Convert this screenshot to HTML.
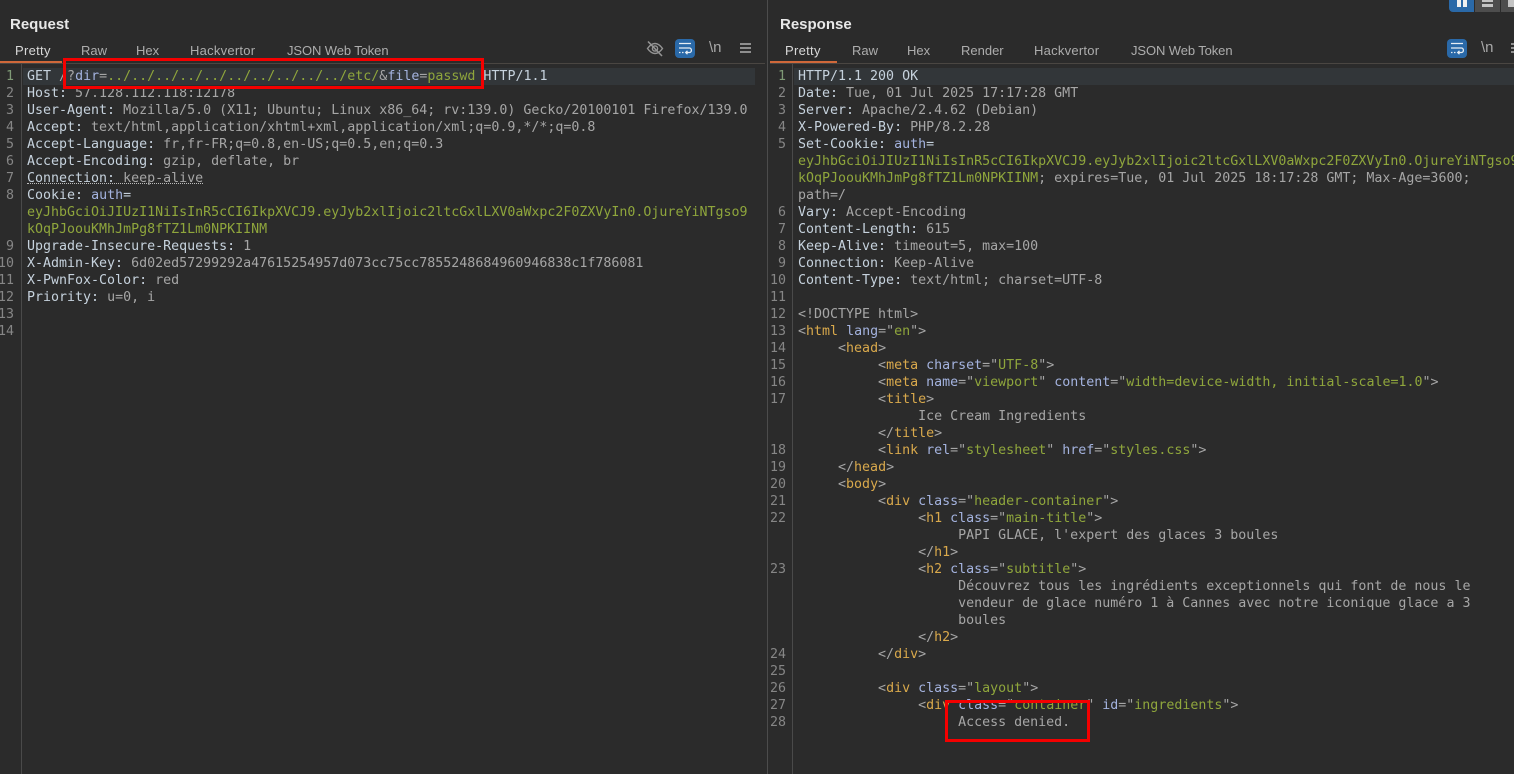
<!DOCTYPE html>
<html lang="en">
<head>
<meta charset="utf-8">
<title>Burp Repeater</title>
<style>
html,body{margin:0;padding:0;background:#2b2b2b;width:1514px;height:774px;overflow:hidden}
.abs,.h,.tab{position:absolute}
.h{font:bold 15px "Liberation Sans",sans-serif;color:#e8e8e8;top:15px;white-space:nowrap}
.tab{font:13px "Liberation Sans",sans-serif;color:#adadad;top:43px;white-space:nowrap}
.tab.on{color:#d8d8d8;letter-spacing:.3px}
.tab.w{letter-spacing:.25px}
.tab.j{letter-spacing:-.1px}
.code{position:absolute;top:68px;font:13.3px/17px "DejaVu Sans Mono","Liberation Mono",monospace;overflow:hidden;color:#a6a6a6}
.r{position:relative;height:17px;white-space:pre}
.r b{position:absolute;font-weight:normal;color:#868686;text-align:right;width:32px;top:0}
#L{left:0;width:756px;height:706px}
#R{left:769px;width:745px;height:706px}
#L .r{padding-left:27px}
#R .r{padding-left:29px}
#L .r b{left:-18px}
#R .r b{left:-15px}
.k{color:#c6d2dd}.a{color:#a4b3df}.g{color:#8fa63c}.t{color:#d9a94c}
.n1{color:#7f9a76!important}
</style>
</head>
<body>
<!-- backgrounds -->
<div class="abs" style="left:23px;top:68px;width:732px;height:17px;background:#323639"></div>
<div class="abs" style="left:794px;top:68px;width:720px;height:17px;background:#323639"></div>
<div class="abs" style="left:767px;top:0;width:1px;height:774px;background:#4c4c4c"></div>
<div class="abs" style="left:21px;top:64px;width:1px;height:710px;background:#4a4a4a"></div>
<div class="abs" style="left:792px;top:64px;width:1px;height:710px;background:#4a4a4a"></div>
<div class="abs" style="left:0;top:63px;width:765px;height:1px;background:#4a4642"></div>
<div class="abs" style="left:770px;top:63px;width:744px;height:1px;background:#4a4642"></div>
<div class="abs" style="left:0;top:61px;width:62px;height:2px;background:#d0683a"></div>
<div class="abs" style="left:770px;top:61px;width:67px;height:2px;background:#d0683a"></div>

<!-- headings -->
<div class="h" style="left:10px;top:16px">Request</div>
<div class="h" style="left:780px;top:16px">Response</div>

<!-- tabs -->
<div class="tab on" style="left:15px">Pretty</div>
<div class="tab" style="left:81px">Raw</div>
<div class="tab" style="left:136px">Hex</div>
<div class="tab w" style="left:190px">Hackvertor</div>
<div class="tab j" style="left:287px">JSON Web Token</div>

<div class="tab on" style="left:785px">Pretty</div>
<div class="tab" style="left:852px">Raw</div>
<div class="tab" style="left:907px">Hex</div>
<div class="tab" style="left:961px">Render</div>
<div class="tab w" style="left:1034px">Hackvertor</div>
<div class="tab j" style="left:1131px">JSON Web Token</div>

<!-- top right layout buttons -->
<div class="abs" style="left:1449px;top:0;width:25px;height:12px;background:#2a69a8;border-radius:0 0 0 4px"></div>
<div class="abs" style="left:1457px;top:0;width:4px;height:7px;background:#f0f0f0"></div>
<div class="abs" style="left:1463px;top:0;width:4px;height:7px;background:#f0f0f0"></div>
<div class="abs" style="left:1475px;top:0;width:25px;height:12px;background:#4d4d4d"></div>
<div class="abs" style="left:1482px;top:0;width:11px;height:2px;background:#c4c4c4"></div>
<div class="abs" style="left:1482px;top:4px;width:11px;height:3px;background:#c4c4c4"></div>
<div class="abs" style="left:1501px;top:0;width:13px;height:12px;background:#4d4d4d"></div>
<div class="abs" style="left:1508px;top:0;width:6px;height:7px;background:#c4c4c4"></div>

<!-- toolbar left -->
<svg class="abs" style="left:645px;top:38px" width="20" height="20" viewBox="0 0 20 20" fill="none" stroke="#949494" stroke-width="1.4">
<path d="M2.500 10.500C5 7 7.500 5.500 10 5.500s5 1.500 7.500 5C15 14 12.500 15.500 10 15.500S5 14 2.500 10.500Z"/>
<circle cx="10" cy="10.500" r="2.600"/>
<path d="M3 3.500L17 18" stroke-width="1.600"/>
</svg>
<div class="abs" style="left:675px;top:39px;width:20px;height:19px;background:#2a69a8;border-radius:4px"></div>
<svg class="abs" style="left:675px;top:39px" width="20" height="19" viewBox="0 0 20 19" fill="none" stroke="#e8eef4" stroke-width="1.300">
<path d="M4 4.500H16M4 9H14.500C17 9 17 13.500 14.500 13.500H11M12.500 11.800L10.700 13.500L12.500 15.200M4 13.500H5.500M7 13.500H8.500"/>
</svg>
<div class="abs" style="left:709px;top:39px;font:15px 'Liberation Sans',sans-serif;color:#a8a8a8">\n</div>
<div class="abs" style="left:740px;top:43px;width:11px;height:2px;background:#8e8e8e"></div>
<div class="abs" style="left:740px;top:47px;width:11px;height:2px;background:#8e8e8e"></div>
<div class="abs" style="left:740px;top:51px;width:11px;height:2px;background:#8e8e8e"></div>

<!-- toolbar right -->
<div class="abs" style="left:1447px;top:39px;width:20px;height:19px;background:#2a69a8;border-radius:4px"></div>
<svg class="abs" style="left:1447px;top:39px" width="20" height="19" viewBox="0 0 20 19" fill="none" stroke="#e8eef4" stroke-width="1.300">
<path d="M4 4.500H16M4 9H14.500C17 9 17 13.500 14.500 13.500H11M12.500 11.800L10.700 13.500L12.500 15.200M4 13.500H5.500M7 13.500H8.500"/>
</svg>
<div class="abs" style="left:1481px;top:39px;font:15px 'Liberation Sans',sans-serif;color:#a8a8a8">\n</div>
<div class="abs" style="left:1511px;top:43px;width:3px;height:2px;background:#8e8e8e"></div>
<div class="abs" style="left:1511px;top:47px;width:3px;height:2px;background:#8e8e8e"></div>
<div class="abs" style="left:1511px;top:51px;width:3px;height:2px;background:#8e8e8e"></div>

<!-- request -->
<div class="code" id="L">
<div class="r"><b class="n1">1</b><span class="k">GET</span> /?<span class="a">dir</span>=<span class="g">../../../../../../../../../../etc/</span>&amp;<span class="a">file</span>=<span class="g">passwd</span> <span class="k">HTTP/1.1</span></div>
<div class="r"><b>2</b><span class="k">Host:</span> 57.128.112.118:12178</div>
<div class="r"><b>3</b><span class="k">User-Agent:</span> Mozilla/5.0 (X11; Ubuntu; Linux x86_64; rv:139.0) Gecko/20100101 Firefox/139.0</div>
<div class="r"><b>4</b><span class="k">Accept:</span> text/html,application/xhtml+xml,application/xml;q=0.9,*/*;q=0.8</div>
<div class="r"><b>5</b><span class="k">Accept-Language:</span> fr,fr-FR;q=0.8,en-US;q=0.5,en;q=0.3</div>
<div class="r"><b>6</b><span class="k">Accept-Encoding:</span> gzip, deflate, br</div>
<div class="r"><b>7</b><span class="k">Connection:</span> keep-alive</div>
<div class="r"><b>8</b><span class="k">Cookie:</span> <span class="a">auth</span><span class="k">=</span></div>
<div class="r"><span class="g">eyJhbGciOiJIUzI1NiIsInR5cCI6IkpXVCJ9.eyJyb2xlIjoic2ltcGxlLXV0aWxpc2F0ZXVyIn0.OjureYiNTgso9</span></div>
<div class="r"><span class="g">kOqPJoouKMhJmPg8fTZ1Lm0NPKIINM</span></div>
<div class="r"><b>9</b><span class="k">Upgrade-Insecure-Requests:</span> 1</div>
<div class="r"><b>10</b><span class="k">X-Admin-Key:</span> 6d02ed57299292a47615254957d073cc75cc7855248684960946838c1f786081</div>
<div class="r"><b>11</b><span class="k">X-PwnFox-Color:</span> red</div>
<div class="r"><b>12</b><span class="k">Priority:</span> u=0, i</div>
<div class="r"><b>13</b></div>
<div class="r"><b>14</b></div>
</div>
<div class="abs" style="left:27px;top:183px;width:176px;height:0;border-top:1px dotted #bdbdbd"></div>

<!-- response -->
<div class="code" id="R">
<div class="r"><b class="n1">1</b><span class="k">HTTP/1.1 200 OK</span></div>
<div class="r"><b>2</b><span class="k">Date:</span> Tue, 01 Jul 2025 17:17:28 GMT</div>
<div class="r"><b>3</b><span class="k">Server:</span> Apache/2.4.62 (Debian)</div>
<div class="r"><b>4</b><span class="k">X-Powered-By:</span> PHP/8.2.28</div>
<div class="r"><b>5</b><span class="k">Set-Cookie:</span> <span class="a">auth</span><span class="k">=</span></div>
<div class="r"><span class="g">eyJhbGciOiJIUzI1NiIsInR5cCI6IkpXVCJ9.eyJyb2xlIjoic2ltcGxlLXV0aWxpc2F0ZXVyIn0.OjureYiNTgso9</span></div>
<div class="r"><span class="g">kOqPJoouKMhJmPg8fTZ1Lm0NPKIINM</span>; expires=Tue, 01 Jul 2025 18:17:28 GMT; Max-Age=3600;</div>
<div class="r">path=/</div>
<div class="r"><b>6</b><span class="k">Vary:</span> Accept-Encoding</div>
<div class="r"><b>7</b><span class="k">Content-Length:</span> 615</div>
<div class="r"><b>8</b><span class="k">Keep-Alive:</span> timeout=5, max=100</div>
<div class="r"><b>9</b><span class="k">Connection:</span> Keep-Alive</div>
<div class="r"><b>10</b><span class="k">Content-Type:</span> text/html; charset=UTF-8</div>
<div class="r"><b>11</b></div>
<div class="r"><b>12</b>&lt;!DOCTYPE html&gt;</div>
<div class="r"><b>13</b>&lt;<span class="t">html</span> <span class="a">lang</span>=&quot;<span class="g">en</span>&quot;&gt;</div>
<div class="r"><b>14</b>     &lt;<span class="t">head</span>&gt;</div>
<div class="r"><b>15</b>          &lt;<span class="t">meta</span> <span class="a">charset</span>=&quot;<span class="g">UTF-8</span>&quot;&gt;</div>
<div class="r"><b>16</b>          &lt;<span class="t">meta</span> <span class="a">name</span>=&quot;<span class="g">viewport</span>&quot; <span class="a">content</span>=&quot;<span class="g">width=device-width, initial-scale=1.0</span>&quot;&gt;</div>
<div class="r"><b>17</b>          &lt;<span class="t">title</span>&gt;</div>
<div class="r">               Ice Cream Ingredients</div>
<div class="r">          &lt;/<span class="t">title</span>&gt;</div>
<div class="r"><b>18</b>          &lt;<span class="t">link</span> <span class="a">rel</span>=&quot;<span class="g">stylesheet</span>&quot; <span class="a">href</span>=&quot;<span class="g">styles.css</span>&quot;&gt;</div>
<div class="r"><b>19</b>     &lt;/<span class="t">head</span>&gt;</div>
<div class="r"><b>20</b>     &lt;<span class="t">body</span>&gt;</div>
<div class="r"><b>21</b>          &lt;<span class="t">div</span> <span class="a">class</span>=&quot;<span class="g">header-container</span>&quot;&gt;</div>
<div class="r"><b>22</b>               &lt;<span class="t">h1</span> <span class="a">class</span>=&quot;<span class="g">main-title</span>&quot;&gt;</div>
<div class="r">                    PAPI GLACE, l'expert des glaces 3 boules</div>
<div class="r">               &lt;/<span class="t">h1</span>&gt;</div>
<div class="r"><b>23</b>               &lt;<span class="t">h2</span> <span class="a">class</span>=&quot;<span class="g">subtitle</span>&quot;&gt;</div>
<div class="r">                    Découvrez tous les ingrédients exceptionnels qui font de nous le</div>
<div class="r">                    vendeur de glace numéro 1 à Cannes avec notre iconique glace a 3</div>
<div class="r">                    boules</div>
<div class="r">               &lt;/<span class="t">h2</span>&gt;</div>
<div class="r"><b>24</b>          &lt;/<span class="t">div</span>&gt;</div>
<div class="r"><b>25</b></div>
<div class="r"><b>26</b>          &lt;<span class="t">div</span> <span class="a">class</span>=&quot;<span class="g">layout</span>&quot;&gt;</div>
<div class="r"><b>27</b>               &lt;<span class="t">div</span> <span class="a">class</span>=&quot;<span class="g">container</span>&quot; <span class="a">id</span>=&quot;<span class="g">ingredients</span>&quot;&gt;</div>
<div class="r"><b>28</b>                    Access denied.</div>
</div>

<!-- red annotation boxes -->
<div class="abs" style="left:63px;top:58px;width:415px;height:25px;border:3px solid #f40000"></div>
<div class="abs" style="left:945px;top:700px;width:139px;height:36px;border:3px solid #f40000"></div>
</body>
</html>
